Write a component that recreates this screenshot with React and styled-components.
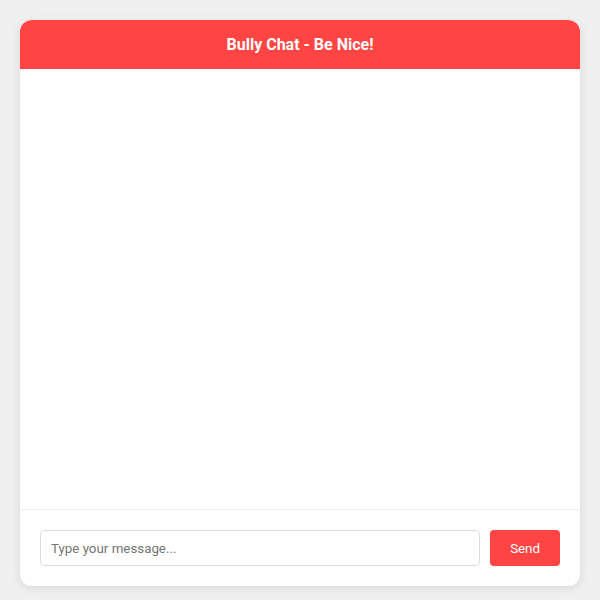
import React, { useState } from 'react'
import styled, { createGlobalStyle } from 'styled-components'

const GlobalStyle = createGlobalStyle`
  * {
    box-sizing: border-box;
  }
  body {
    margin: 0;
    padding: 20px;
    background: #f0f0f0;
    font-family: Roboto, "Liberation Sans", sans-serif;
  }
`

const ChatCard = styled.div`
  display: flex;
  flex-direction: column;
  width: 560px;
  height: 566px;
  background: #fff;
  border-radius: 12px;
  box-shadow: 0 2px 10px rgba(0, 0, 0, 0.1);
  overflow: hidden;
`

const Header = styled.div`
  background: #ff4444;
  color: #fff;
  text-align: center;
  padding: 15px;
  font-size: 16px;
  font-weight: 700;
  line-height: 19px;
`

const Messages = styled.div`
  flex: 1;
  overflow-y: auto;
  padding: 20px;
`

const Footer = styled.form`
  display: flex;
  gap: 10px;
  padding: 20px;
  border-top: 1px solid #eee;
`

const Input = styled.input`
  flex: 1;
  height: 36px;
  padding: 0 10px;
  border: 1px solid #ddd;
  border-radius: 4px;
  font-family: inherit;
  font-size: 13.333px;
  color: #333;
  outline: none;

  &::placeholder {
    color: #757575;
  }
`

const SendButton = styled.button`
  height: 36px;
  padding: 0 20px;
  border: none;
  border-radius: 4px;
  background: #ff4444;
  color: #fff;
  font-family: inherit;
  font-size: 13.333px;
  cursor: pointer;
`

export default function App() {
  const [text, setText] = useState('')
  const [messages, setMessages] = useState([])

  const onSubmit = (e) => {
    e.preventDefault()
    if (!text.trim()) return
    setMessages([...messages, text])
    setText('')
  }

  return (
    <>
      <GlobalStyle />
      <ChatCard>
        <Header>Bully Chat - Be Nice!</Header>
        <Messages>
          {messages.map((m, i) => <div key={i}>{m}</div>)}
        </Messages>
        <Footer onSubmit={onSubmit}>
          <Input
            value={text}
            onChange={(e) => setText(e.target.value)}
            placeholder='Type your message...'
          />
          <SendButton type='submit'>Send</SendButton>
        </Footer>
      </ChatCard>
    </>
  )
}
